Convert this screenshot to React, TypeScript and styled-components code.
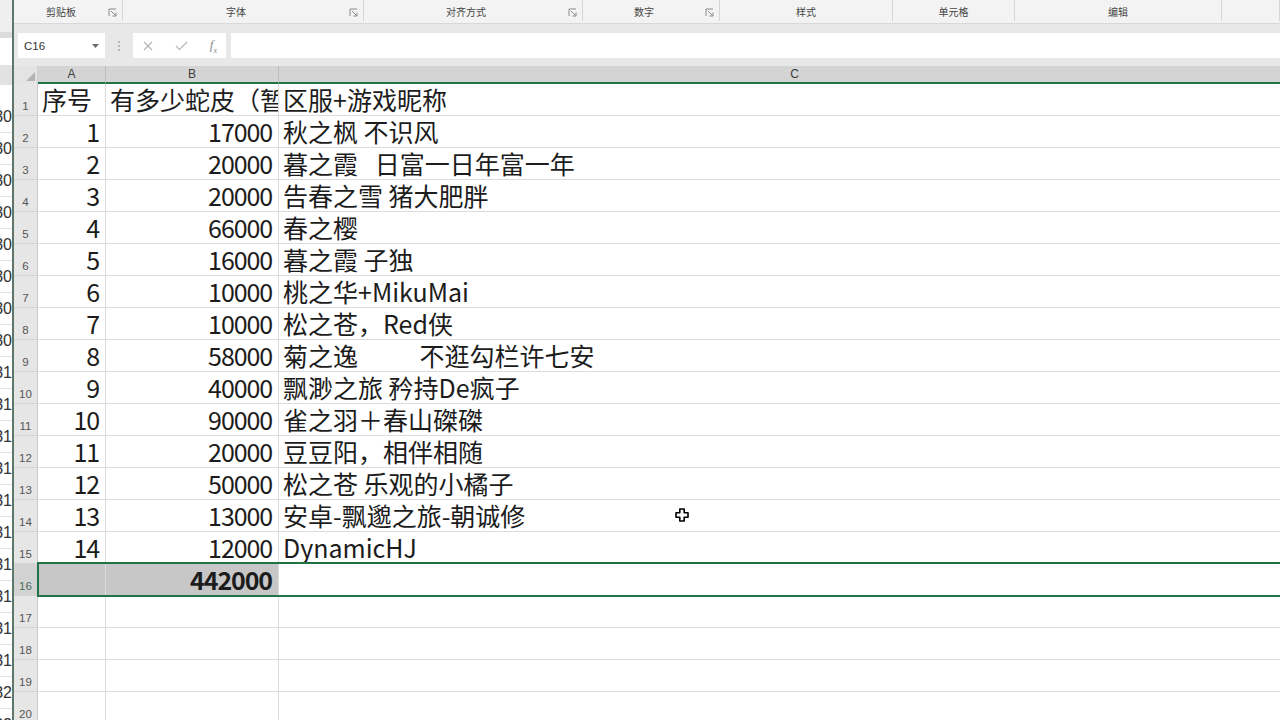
import React from 'react';
import styled, { createGlobalStyle } from 'styled-components';

const GlobalStyle = createGlobalStyle`
  html, body {
    margin: 0;
    height: 100%;
    overflow: hidden;
    background: #fff;
  }
  #root { height: 100%; }
`;

const CELL_FONT = `"Noto Sans CJK SC", "Liberation Sans", sans-serif`;
const HEAD_FONT = `"Liberation Sans", "Noto Sans CJK SC", sans-serif`;
const UI_FONT = `"Noto Sans CJK SC", "Liberation Sans", sans-serif`;
const COLS = '24px 68px 173px 1032px';

interface IRow {
  n: number;
  a?: string | number;
  b?: string | number;
  c?: string;
}

const rows: IRow[] = [
  { n: 1, a: '序号', b: '有多少蛇皮（暂停营业）', c: '区服+游戏昵称' },
  { n: 2, a: 1, b: 17000, c: '秋之枫 不识风' },
  { n: 3, a: 2, b: 20000, c: '暮之霞   日富一日年富一年' },
  { n: 4, a: 3, b: 20000, c: '告春之雪 猪大肥胖' },
  { n: 5, a: 4, b: 66000, c: '春之樱' },
  { n: 6, a: 5, b: 16000, c: '暮之霞 子独' },
  { n: 7, a: 6, b: 10000, c: '桃之华+MikuMai' },
  { n: 8, a: 7, b: 10000, c: '松之苍，Red侠' },
  { n: 9, a: 8, b: 58000, c: '菊之逸           不逛勾栏许七安' },
  { n: 10, a: 9, b: 40000, c: '飘渺之旅 矜持De疯子' },
  { n: 11, a: 10, b: 90000, c: '雀之羽＋春山磔磔' },
  { n: 12, a: 11, b: 20000, c: '豆豆阳，相伴相随' },
  { n: 13, a: 12, b: 50000, c: '松之苍 乐观的小橘子' },
  { n: 14, a: 13, b: 13000, c: '安卓-飘邈之旅-朝诚修' },
  { n: 15, a: 14, b: 12000, c: 'DynamicHJ' },
  { n: 16, b: 442000 },
  { n: 17 }, { n: 18 }, { n: 19 }, { n: 20 },
];

const behindNums = ['30', '30', '30', '30', '30', '30', '30', '30', '31', '31', '31', '31', '31', '31', '31', '31', '31', '31', '32', '32'];

const groups = [
  { label: '剪贴板', width: 109, launcher: true },
  { label: '字体', width: 241, launcher: true },
  { label: '对齐方式', width: 219, launcher: true },
  { label: '数字', width: 137, launcher: true },
  { label: '样式', width: 173 },
  { label: '单元格', width: 122 },
  { label: '编辑', width: 207 },
  { label: '', width: 58 },
];

const Launcher = () => (
  <svg width="9" height="9" viewBox="0 0 9 9">
    <path d="M1 8V1h7" fill="none" stroke="#8a8a8a" strokeWidth="1" />
    <path d="M3 3l4.5 4.5M8 4.5V8H4.5" fill="none" stroke="#8a8a8a" strokeWidth="1" />
  </svg>
);

const App = () => {
  return (
    <>
      <GlobalStyle />
      <Screen>
        <BehindWindow>
          <BehindBar $h={32} $bg="#efefef" />
          <BehindBar $h={6} $bg="#dcdcdc" />
          <BehindBar $h={27} $bg="#ffffff" />
          <BehindBar $h={20} $bg="#e2e2e2" />
          <BehindBar $h={16} $bg="#ffffff" />
          {behindNums.map((t, i) => (
            <BehindRow key={i}>{t}</BehindRow>
          ))}
        </BehindWindow>
        <WindowEdge />
        <Workbook>
          <Ribbon>
            {groups.map((g, i) => (
              <RibbonGroup key={i} $w={g.width}>
                <GroupLabel>{g.label}</GroupLabel>
                {g.launcher && <LauncherSlot><Launcher /></LauncherSlot>}
              </RibbonGroup>
            ))}
          </Ribbon>

          <FormulaArea>
            <NameBox>
              <span>C16</span>
              <svg width="7" height="4" viewBox="0 0 7 4">
                <path d="M0 0h7L3.5 4z" fill="#6a6a6a" />
              </svg>
            </NameBox>
            <Grip>
              <i /><i /><i />
            </Grip>
            <FnButtons>
              <svg width="10" height="10" viewBox="0 0 10 10">
                <path d="M1 1l8 8M9 1l-8 8" stroke="#b5b5b5" strokeWidth="1.2" />
              </svg>
              <svg width="13" height="10" viewBox="0 0 13 10">
                <path d="M1 5l3.5 3.5L12 1" fill="none" stroke="#b5b5b5" strokeWidth="1.2" />
              </svg>
              <FxMark>f<sub>x</sub></FxMark>
            </FnButtons>
            <FormulaInput />
          </FormulaArea>

          <ColumnHeaders>
            <Corner>
              <svg width="9" height="9" viewBox="0 0 9 9">
                <path d="M9 0v9H0z" fill="#b4b4b4" />
              </svg>
            </Corner>
            <ColHead>A</ColHead>
            <ColHead>B</ColHead>
            <ColHead>C</ColHead>
          </ColumnHeaders>

          <Sheet>
            {rows.map((r) => {
              const selected = r.n === 16;
              const numA = typeof r.a === 'number';
              const numB = typeof r.b === 'number';
              return (
                <Row key={r.n}>
                  <RowHead $selected={selected}>{r.n}</RowHead>
                  <Cell $num={numA} $fill={selected}>{r.a}</Cell>
                  <Cell $num={numB} $fill={selected} $bold={selected}>{r.b}</Cell>
                  <Cell>{r.c}</Cell>
                  {selected && <Selection />}
                </Row>
              );
            })}
          </Sheet>

          <CellCursor width="14" height="14" viewBox="0 0 14 14">
            <path
              d="M4.8 1h4.4v3.8H13v4.4H9.2V13H4.8V9.2H1V4.8h3.8z"
              fill="#fff"
              stroke="#000"
              strokeWidth="1.6"
              strokeLinejoin="round"
            />
          </CellCursor>
        </Workbook>
      </Screen>
    </>
  );
};

export default App;

const Screen = styled.div`
  display: flex;
  width: 1280px;
  height: 720px;
  overflow: hidden;
  background: #fff;
`;

const BehindWindow = styled.div`
  width: 12px;
  flex-shrink: 0;
  display: flex;
  flex-direction: column;
  overflow: hidden;
  background: #fff;
`;

const BehindBar = styled.div<{ $h: number; $bg: string }>`
  height: ${(p) => p.$h}px;
  flex-shrink: 0;
  background: ${(p) => p.$bg};
`;

const BehindRow = styled.div`
  height: 32px;
  flex-shrink: 0;
  box-sizing: border-box;
  border-bottom: 1px solid #e4e4e4;
  display: flex;
  justify-content: flex-end;
  align-items: center;
  font-family: ${HEAD_FONT};
  font-size: 16px;
  color: #333;
  white-space: nowrap;
`;

const WindowEdge = styled.div`
  width: 2px;
  flex-shrink: 0;
  background: #5d7769;
`;

const Workbook = styled.div`
  position: relative;
  flex: 1;
  min-width: 0;
  display: flex;
  flex-direction: column;
  overflow: hidden;
`;

const Ribbon = styled.div`
  height: 24px;
  flex-shrink: 0;
  box-sizing: border-box;
  display: flex;
  background: #f3f3f3;
  border-bottom: 1px solid #d8d8d8;
`;

const RibbonGroup = styled.div<{ $w: number }>`
  width: ${(p) => p.$w}px;
  flex-shrink: 0;
  box-sizing: border-box;
  display: flex;
  align-items: flex-end;
  padding-bottom: 3px;
  border-right: 1px solid #d6d6d6;
  margin-bottom: 2px;
`;

const GroupLabel = styled.div`
  flex: 1;
  text-align: center;
  font-family: ${UI_FONT};
  font-size: 10px;
  line-height: 12px;
  color: #444;
`;

const LauncherSlot = styled.div`
  width: 14px;
  display: flex;
  align-items: flex-end;
  padding-bottom: 1px;
`;

const FormulaArea = styled.div`
  height: 42px;
  flex-shrink: 0;
  box-sizing: border-box;
  display: flex;
  padding: 9px 0 8px 4px;
  background: #e8e8e8;
`;

const NameBox = styled.div`
  width: 87px;
  box-sizing: border-box;
  display: flex;
  align-items: center;
  justify-content: space-between;
  padding: 0 6px 0 6px;
  background: #fff;
  font-family: ${HEAD_FONT};
  font-size: 11.5px;
  color: #333;
`;

const Grip = styled.div`
  width: 28px;
  display: flex;
  flex-direction: column;
  align-items: center;
  justify-content: center;
  gap: 2px;

  i {
    width: 2px;
    height: 2px;
    background: #b9b9b9;
  }
`;

const FnButtons = styled.div`
  width: 93px;
  box-sizing: border-box;
  display: flex;
  align-items: center;
  justify-content: space-between;
  padding: 0 9px 0 10px;
  background: #fff;
`;

const FxMark = styled.span`
  font-family: "Liberation Serif", serif;
  font-style: italic;
  font-size: 13px;
  color: #8c8c8c;

  sub {
    font-size: 8px;
  }
`;

const FormulaInput = styled.div`
  flex: 1;
  margin-left: 5px;
  background: #fff;
`;

const ColumnHeaders = styled.div`
  display: grid;
  grid-template-columns: ${COLS};
  width: max-content;
  height: 18px;
  flex-shrink: 0;
`;

const Corner = styled.div`
  display: flex;
  align-items: flex-end;
  justify-content: flex-end;
  padding: 0 2px 3px 0;
  background: #e4e4e4;
  border-right: 1px solid #cfcfcf;
`;

const ColHead = styled.div`
  box-sizing: border-box;
  background: #d4d4d4;
  border-right: 1px solid #bdbdbd;
  border-bottom: 2px solid #217346;
  text-align: center;
  font-family: ${HEAD_FONT};
  font-size: 12px;
  line-height: 16px;
  color: #3e3e3e;
`;

const Sheet = styled.div`
  display: flex;
  flex-direction: column;
`;

const Row = styled.div`
  position: relative;
  display: grid;
  grid-template-columns: ${COLS};
  width: max-content;
  height: 32px;
  flex-shrink: 0;
`;

const RowHead = styled.div<{ $selected?: boolean }>`
  box-sizing: border-box;
  display: flex;
  align-items: flex-end;
  justify-content: center;
  padding-bottom: 3px;
  background: ${(p) => (p.$selected ? '#d3d3d3' : '#e6e6e6')};
  border-right: 1px solid #c9c9c9;
  border-bottom: 1px solid #d3d3d3;
  font-family: ${HEAD_FONT};
  font-size: 11.5px;
  color: ${(p) => (p.$selected ? '#4d6e5a' : '#555')};
`;

const Cell = styled.div<{ $num?: boolean; $fill?: boolean; $bold?: boolean }>`
  box-sizing: border-box;
  min-width: 0;
  overflow: hidden;
  white-space: pre;
  text-spacing-trim: space-all;
  padding: ${(p) => (p.$num ? '0 6px 0 4px' : '0 5px 0 4px')};
  border-right: 1px solid #dcdcdc;
  border-bottom: 1px solid #dcdcdc;
  background: ${(p) => (p.$fill ? '#c7c7c7' : '#fff')};
  text-align: ${(p) => (p.$num ? 'right' : 'left')};
  letter-spacing: ${(p) => (p.$num ? '-1.1px' : '0')};
  font-family: ${CELL_FONT};
  font-size: 25px;
  font-weight: ${(p) => (p.$bold ? 700 : 400)};
  line-height: 30px;
  color: #1c1c1c;
`;

const Selection = styled.div`
  position: absolute;
  z-index: 2;
  top: -2px;
  bottom: -1px;
  left: 23px;
  right: 0;
  border: 2px solid #217346;
  pointer-events: none;
`;

const CellCursor = styled.svg`
  position: absolute;
  z-index: 3;
  left: 661px;
  top: 508px;
`;
